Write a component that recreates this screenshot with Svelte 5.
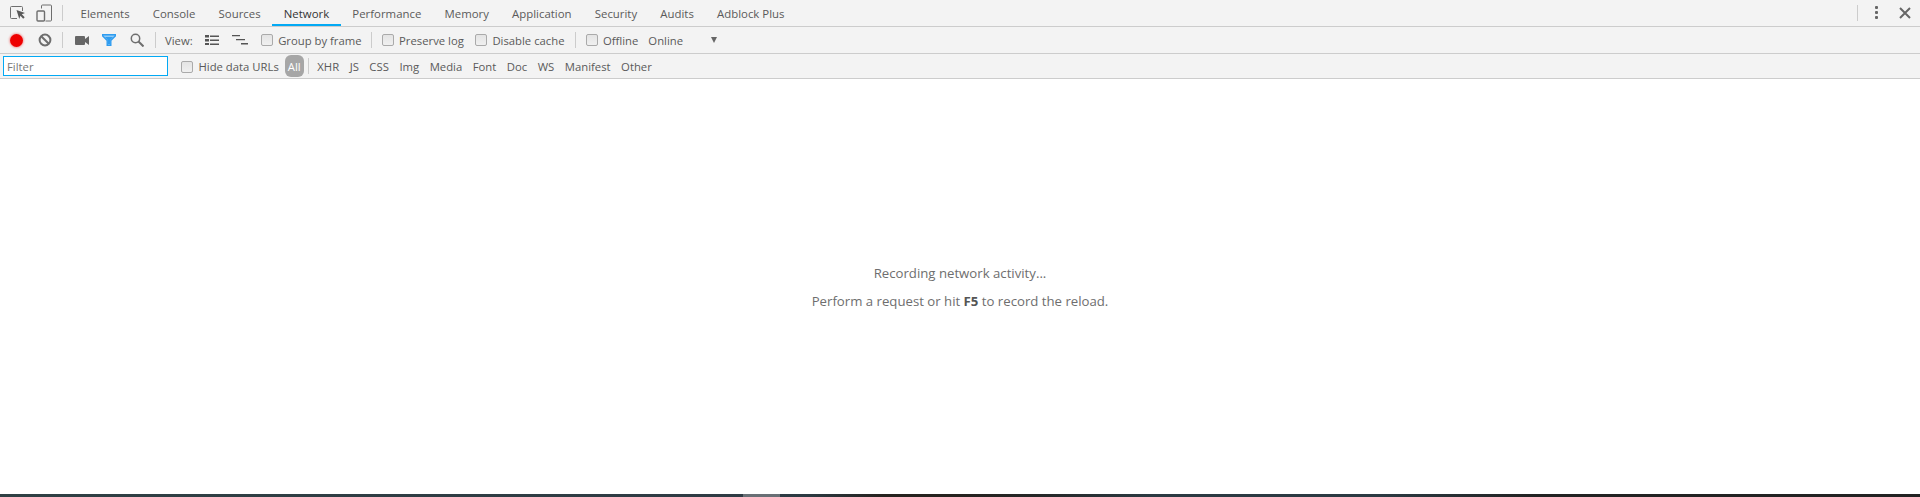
<script lang="ts">
  const tabs = ['Elements', 'Console', 'Sources', 'Network', 'Performance', 'Memory', 'Application', 'Security', 'Audits', 'Adblock Plus'];
  const types = ['XHR', 'JS', 'CSS', 'Img', 'Media', 'Font', 'Doc', 'WS', 'Manifest', 'Other'];
</script>

<div class="devtools">
  <div class="tabbar">
    <button class="icon first" aria-label="Select element">
      <svg width="18" height="16" viewBox="0 0 18 16">
        <path d="M7 13.5H1.5a1 1 0 0 1-1-1v-10a1 1 0 0 1 1-1h10a1 1 0 0 1 1 1V6" fill="none" stroke="#6e6e6e" stroke-width="1"/>
        <path d="M6.5 5l8.5 3-3.2 1.3 2.9 3-1.5 1.4-2.8-3L9.300 14z" fill="#5a5a5a"/>
      </svg>
    </button>
    <button class="icon second" aria-label="Toggle device">
      <svg width="16" height="18" viewBox="0 0 16 18">
        <path d="M5.500 4.500V2a1 1 0 0 1 1-1h8a1 1 0 0 1 1 1v14a1 1 0 0 1-1 1H9.500" fill="none" stroke="#6e6e6e"/>
        <rect x="1" y="7" width="7.500" height="10" rx="1" fill="none" stroke="#6e6e6e" stroke-width="1.400"/>
      </svg>
    </button>
    <span class="sep tab-sep"></span>
    <div class="tabs">
      {#each tabs as tab}
        <div class="tab" class:active={tab === 'Network'}>{tab}</div>
      {/each}
    </div>
    <div class="right">
      <span class="sep"></span>
      <button class="icon dots" aria-label="Customize">
        <svg width="4" height="14" viewBox="0 0 4 14"><g fill="#666"><rect x="0" y="0" width="3" height="3" rx="1"/><rect x="0" y="5" width="3" height="3" rx="1"/><rect x="0" y="10" width="3" height="3" rx="1"/></g></svg>
      </button>
      <button class="icon close" aria-label="Close">
        <svg width="12" height="12" viewBox="0 0 12 12"><path d="M1 1l10 10M11 1L1 11" stroke="#666" stroke-width="2" fill="none"/></svg>
      </button>
    </div>
  </div>

  <div class="toolbar">
    <span class="record"></span>
    <svg class="clear" width="14" height="14" viewBox="0 0 14 14">
      <circle cx="7" cy="7" r="5.400" fill="none" stroke="#6e6e6e" stroke-width="2"/>
      <path d="M3.200 3.200l7.600 7.600" stroke="#6e6e6e" stroke-width="2"/>
    </svg>
    <span class="sep"></span>
    <svg class="camera" width="14" height="9" viewBox="0 0 14 9">
      <path d="M0 1a1 1 0 0 1 1-1h8a1 1 0 0 1 1 1v2L14 0v9l-4-3v2a1 1 0 0 1-1 1H1a1 1 0 0 1-1-1z" fill="#666"/>
    </svg>
    <svg class="funnel" width="14" height="12" viewBox="0 0 14 12">
      <path d="M.7.700h12.600v1.300L8.800 6.500v4.800H5.200V6.500L.7 2z" fill="#8fcbf7" stroke="#2f9cf0" stroke-width="1.400"/>
      <path d="M3 3h8L8 6.200V10H6V6.200z" fill="#2f9cf0"/>
    </svg>
    <svg class="search" width="14" height="14" viewBox="0 0 14 14">
      <circle cx="5.500" cy="5.500" r="4.200" fill="none" stroke="#6e6e6e" stroke-width="1.500"/>
      <path d="M8.500 8.500l5 5" stroke="#6e6e6e" stroke-width="2"/>
    </svg>
    <span class="sep"></span>
    <span class="label view">View:</span>
    <svg class="list" width="14" height="10" viewBox="0 0 14 10">
      <path d="M0 0h4v2.500H0zM5 .5h9v1.500H5zM0 4h4v2.500H0zM5 4.500h9v1.500H5zM0 8h4v2H0zM5 8.500h9v1.500H5z" fill="#555"/>
    </svg>
    <svg class="wave" width="16" height="10" viewBox="0 0 16 10">
      <path d="M0 0h8v1.200H0zM4 4h9v1.200H4zM9 8h7v1.500H9z" fill="#555"/>
    </svg>
    <label class="check group"><input type="checkbox" />Group by frame</label>
    <span class="sep"></span>
    <label class="check"><input type="checkbox" />Preserve log</label>
    <label class="check disable"><input type="checkbox" />Disable cache</label>
    <span class="sep"></span>
    <label class="check"><input type="checkbox" />Offline</label>
    <span class="label online">Online</span>
    <span class="arrow"></span>
  </div>

  <div class="filterbar">
    <input class="filter" type="text" placeholder="Filter" />
    <label class="check hide"><input type="checkbox" />Hide data URLs</label>
    <span class="all">All</span>
    <span class="sep short"></span>
    <div class="types">
      {#each types as type}
        <span>{type}</span>
      {/each}
    </div>
  </div>

  <div class="empty">
    <p>Recording network activity...</p>
    <p>Perform a request or hit <b>F5</b> to record the reload.</p>
  </div>

  <div class="strip">
    <span class="thumb"></span>
  </div>
</div>

<style>
  :global(body) {
    margin: 0;
    background: #fff;
  }

  .devtools {
    height: 497px;
    display: flex;
    flex-direction: column;
    font-family: 'Open Sans', 'Noto Sans', sans-serif;
    font-size: 11.3px;
    color: #5a5a5a;
    overflow: hidden;
  }

  button {
    background: none;
    border: none;
    padding: 0;
    display: flex;
    align-items: center;
  }

  .tabbar {
    height: 26px;
    flex: none;
    display: flex;
    align-items: center;
    background: #f3f3f3;
    border-bottom: 1px solid #ccc;
  }

  .icon.first {
    margin-left: 10px;
  }

  .icon.second {
    margin-left: 8px;
  }

  .sep {
    width: 1px;
    height: 16px;
    background: #ccc;
    flex: none;
  }

  .tab-sep {
    margin-left: 10px;
  }

  .tabs {
    display: flex;
    margin-left: 6px;
    height: 26px;
  }

  .tab {
    padding: 0 11.6px;
    font-size: 11.4px;
    line-height: 27px;
    color: #5a5a5a;
    white-space: nowrap;
  }

  .tab.active {
    color: #333;
    box-shadow: inset 0 -2px 0 #03a9f4;
  }

  .right {
    margin-left: auto;
    display: flex;
    align-items: center;
  }

  .icon.dots {
    margin-left: 17px;
  }

  .icon.close {
    margin-left: 20px;
    margin-right: 9px;
  }

  .toolbar {
    height: 26px;
    flex: none;
    display: flex;
    align-items: center;
    background: #f3f3f3;
    border-bottom: 1px solid #ccc;
  }

  .record {
    width: 13px;
    height: 13px;
    margin-left: 10px;
    border-radius: 50%;
    background: #ee0000;
    box-shadow: 0 0 2px 1px rgba(238, 0, 0, 0.3);
  }

  .clear {
    margin-left: 15px;
  }

  .clear + .sep {
    margin-left: 10px;
  }

  .camera {
    margin-left: 12px;
  }

  .funnel {
    margin-left: 13px;
  }

  .search {
    margin-left: 14px;
  }

  .search + .sep {
    margin-left: 11px;
  }

  .label {
    white-space: nowrap;
  }

  .view {
    margin-left: 9px;
  }

  .list {
    margin-left: 12px;
  }

  .wave {
    margin-left: 13px;
  }

  .check {
    display: flex;
    align-items: center;
    white-space: nowrap;
  }

  .check input {
    appearance: none;
    width: 12px;
    height: 12px;
    margin: 0 5.5px 0 0;
    border: 1px solid #aaa;
    border-radius: 2px;
    background: linear-gradient(#e4e4e4, #f0f0f0);
  }

  .group {
    margin-left: 13px;
    margin-right: 9px;
  }

  .sep + .check {
    margin-left: 10px;
  }

  .disable {
    margin-left: 11px;
    margin-right: 10px;
  }

  .online {
    margin-left: 10px;
  }

  .arrow {
    margin-left: 27.5px;
    width: 0;
    height: 0;
    border-left: 3.5px solid transparent;
    border-right: 3.5px solid transparent;
    border-top: 6px solid #666;
    margin-top: -1px;
  }

  .filterbar {
    height: 24px;
    flex: none;
    display: flex;
    align-items: center;
    background: #f3f3f3;
    border-bottom: 1px solid #ccc;
  }

  .filter {
    width: 157px;
    margin-left: 3px;
    padding: 1px 3px 0;
    height: 17px;
    box-sizing: content-box;
    border: 1px solid #03a9f4;
    outline: none;
    background: #fff;
    font: inherit;
  }

  .filter::placeholder {
    color: #777;
    opacity: 1;
  }

  .hide {
    margin-left: 13px;
    padding-top: 1px;
  }

  .all {
    margin-left: 6px;
    width: 19px;
    height: 22px;
    line-height: 23px;
    border-radius: 6px;
    background: #a6a6a6;
    color: #fff;
    text-align: center;
  }

  .short {
    margin-left: 4px;
  }

  .types {
    display: flex;
    gap: 10.5px;
    margin-left: 8.5px;
    padding-top: 1px;
  }

  .empty {
    flex: 1;
    display: flex;
    flex-direction: column;
    align-items: center;
    justify-content: center;
    background: #fff;
    color: #6e6e6e;
    font-size: 13.2px;
    gap: 10px;
  }

  .empty p {
    margin: 0;
    line-height: 18px;
  }

  .empty b {
    font-weight: 700;
    color: #555;
  }

  .strip {
    height: 3px;
    flex: none;
    display: flex;
    background: linear-gradient(90deg, #2f4044 0%, #2e3b44 40%, #2b3a42 42%, #26221f 46%, #26221f 50%, #252727 54%, #2b3a42 60%, #2b3a42 72%, #222 80%, #222 100%);
  }

  .thumb {
    width: 37px;
    margin-left: 743px;
    background: #686f75;
  }
</style>
